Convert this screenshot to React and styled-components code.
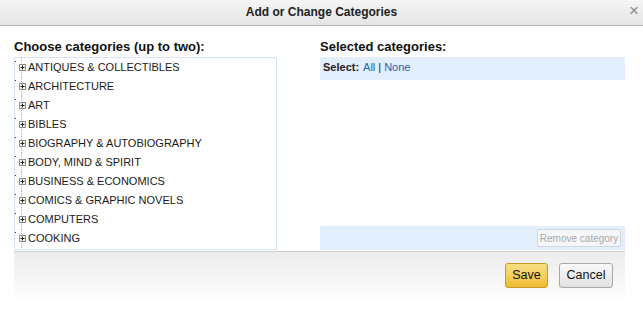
import React from 'react';
import styled, { createGlobalStyle } from 'styled-components';

const GlobalStyle = createGlobalStyle`
  body {
    margin: 0;
    background: #fff;
    font-family: "Liberation Sans", Arial, sans-serif;
    color: #111;
  }
`;

const Dialog = styled.div`
  width: 643px;
  height: 309px;
  background: #fff;
`;

const Header = styled.div`
  position: relative;
  height: 25px;
  line-height: 25px;
  text-align: center;
  font-size: 12px;
  font-weight: bold;
  color: #222;
  background: linear-gradient(#f5f5f5, #e5e5e5);
  border-bottom: 1px solid #b9b9b9;
`;

const Close = styled.span`
  position: absolute;
  right: 4px;
  top: -2px;
  font-size: 17px;
  font-weight: normal;
  color: #8a8a8a;
`;

const Body = styled.div`
  padding: 12px 18px 0 14px;
`;

const Columns = styled.div`
  display: grid;
  grid-template-columns: 263px 305px;
  column-gap: 43px;
`;

const Column = styled.div`
  display: flex;
  flex-direction: column;
`;

const Heading = styled.div`
  font-size: 13px;
  font-weight: bold;
  line-height: 17px;
  margin-bottom: 2px;
  color: #111;
`;

const TreeBox = styled.div`
  height: 191px;
  border: 1px solid #d6e3f3;
  overflow: hidden;
`;

const Row = styled.div`
  display: flex;
  align-items: flex-start;
  height: 19px;
`;

const Label = styled.span`
  margin-left: 1px;
  font-size: 11px;
  line-height: 18px;
  color: #1a1a1a;
`;

const SelectedBox = styled.div`
  height: 193px;
  display: flex;
  flex-direction: column;
  background: #fff;
`;

const Bar = styled.div`
  display: flex;
  align-items: ${p => (p.$end ? 'center' : 'flex-start')};
  justify-content: ${p => (p.$end ? 'flex-end' : 'flex-start')};
  height: ${p => p.$h}px;
  padding: ${p => (p.$end ? '0 4px 0 3px' : '4px 4px 0 3px')};
  box-sizing: border-box;
  background: #e3eefc;
  font-size: 11px;
  line-height: 13px;
  color: #222;
`;

const Strong = styled.b`
  margin-right: 4px;
`;

const Link = styled.a`
  color: #1c64b4;
  text-decoration: none;
  margin: 0 3px;
  &:first-of-type {
    margin-left: 0;
  }
`;

const Fill = styled.div`
  flex: 1;
`;

const RemoveButton = styled.button`
  height: 18px;
  width: 84px;
  padding: 0;
  white-space: nowrap;
  font-family: inherit;
  font-size: 10px;
  color: #a8a8a8;
  background: #f5f7fa;
  border: 1px solid #d0d6de;
  border-radius: 2px;
`;

const Footer = styled.div`
  margin-top: 1px;
  height: 46px;
  border-top: 1px solid #cfcfcf;
  background: linear-gradient(#ececec, #fdfdfd);
  display: flex;
  justify-content: flex-end;
  align-items: center;
  gap: 11px;
  padding-right: 12px;
`;

const Button = styled.button`
  height: 25px;
  width: ${p => p.$w}px;
  padding: 0;
  font-family: inherit;
  font-size: 12.5px;
  color: #111;
  border-radius: 3px;
  border: 1px solid ${p => (p.$primary ? '#c49a2c' : '#a9a9a9')};
  background: ${p =>
    p.$primary
      ? 'linear-gradient(#f8df86, #efbd33)'
      : 'linear-gradient(#f9f9f9, #e2e2e2)'};
`;

const Twig = () => (
  <svg width="12" height="19" viewBox="0 0 12 19">
    <rect x="0" y="3" width="1" height="1" fill="#333" />
    <line x1="6.5" y1="0" x2="6.5" y2="19" stroke="#b5b5b5" strokeDasharray="1 1" />
    <rect x="4.5" y="6.5" width="6" height="6" fill="#f4f4f4" stroke="#8c8c8c" />
    <line x1="5.5" y1="9.5" x2="9.5" y2="9.5" stroke="#222" />
    <line x1="7.5" y1="7.5" x2="7.5" y2="11.5" stroke="#222" />
  </svg>
);

const categories = [
  'ANTIQUES & COLLECTIBLES',
  'ARCHITECTURE',
  'ART',
  'BIBLES',
  'BIOGRAPHY & AUTOBIOGRAPHY',
  'BODY, MIND & SPIRIT',
  'BUSINESS & ECONOMICS',
  'COMICS & GRAPHIC NOVELS',
  'COMPUTERS',
  'COOKING',
];

const App = () => (
  <>
    <GlobalStyle />
    <Dialog>
      <Header>
        Add or Change Categories
        <Close>×</Close>
      </Header>
      <Body>
        <Columns>
          <Column>
            <Heading>Choose categories (up to two):</Heading>
            <TreeBox>
              {categories.map(name => (
                <Row key={name}>
                  <Twig />
                  <Label>{name}</Label>
                </Row>
              ))}
            </TreeBox>
          </Column>
          <Column>
            <Heading>Selected categories:</Heading>
            <SelectedBox>
              <Bar $h={23}>
                <Strong>Select:</Strong>
                <Link href="#">All</Link>|<Link href="#">None</Link>
              </Bar>
              <Fill />
              <Bar $h={24} $end>
                <RemoveButton disabled>Remove category</RemoveButton>
              </Bar>
            </SelectedBox>
          </Column>
        </Columns>
        <Footer>
          <Button $primary $w={43}>Save</Button>
          <Button $w={54}>Cancel</Button>
        </Footer>
      </Body>
    </Dialog>
  </>
);

export default App;
